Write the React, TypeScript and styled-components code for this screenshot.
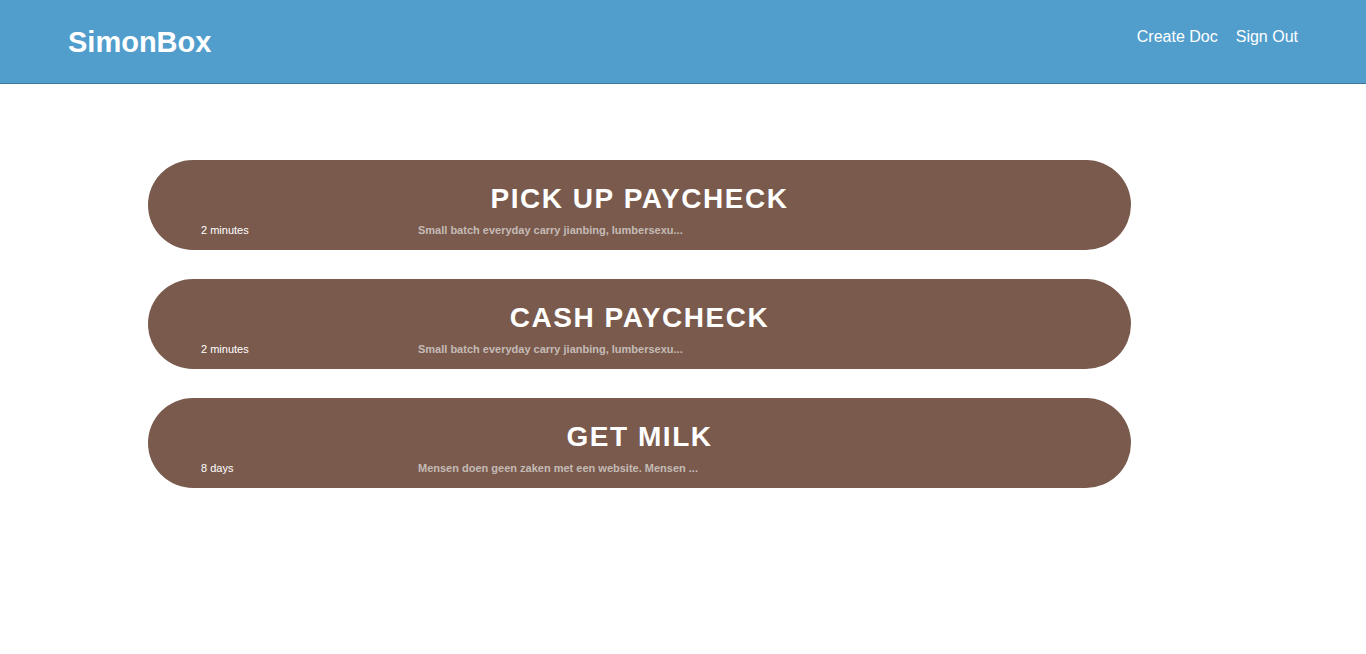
import React from "react";
import styled, { createGlobalStyle } from "styled-components";

const GlobalStyle = createGlobalStyle`
  html, body { margin: 0; padding: 0; background: #ffffff; }
  body { font-family: "Liberation Sans", Arial, sans-serif; }
`;

const Header = styled.header`
  display: flex;
  align-items: center;
  justify-content: space-between;
  height: 83px;
  padding: 0 68px;
  background: #519ecd;
  border-bottom: 1px solid #3b77a0;
`;

const Logo = styled.div`
  color: #ffffff;
  font-size: 29px;
  font-weight: 700;
  line-height: 33px;
  padding-top: 1px;
`;

const Nav = styled.nav`
  display: flex;
  gap: 18px;
  margin-bottom: 10px;
`;

const NavLink = styled.a`
  color: #ffffff;
  font-size: 16px;
  line-height: 18px;
  text-decoration: none;
  cursor: pointer;
`;

const List = styled.main`
  display: flex;
  flex-direction: column;
  gap: 29px;
  padding: 76px 0 0 148px;
`;

const Card = styled.div`
  box-sizing: border-box;
  width: 983px;
  height: 90px;
  border-radius: 45px;
  background: #7a5a4d;
  padding-top: 23px;
`;

const Title = styled.h2`
  margin: 0;
  text-align: center;
  color: #ffffff;
  font-size: 28px;
  font-weight: 700;
  letter-spacing: 1.55px;
  line-height: 32px;
`;

const Meta = styled.div`
  display: flex;
  margin-top: 9px;
  padding-left: 53px;
  font-size: 11px;
  line-height: 13px;
`;

const Time = styled.span`
  width: 217px;
  color: #ffffff;
`;

const Excerpt = styled.span`
  color: #c4bab5;
  font-weight: 700;
`;

const docs = [
  { title: "PICK UP PAYCHECK", time: "2 minutes", excerpt: "Small batch everyday carry jianbing, lumbersexu..." },
  { title: "CASH PAYCHECK", time: "2 minutes", excerpt: "Small batch everyday carry jianbing, lumbersexu..." },
  { title: "GET MILK", time: "8 days", excerpt: "Mensen doen geen zaken met een website. Mensen ..." },
];

export default function App() {
  return (
    <>
      <GlobalStyle />
      <Header>
        <Logo>SimonBox</Logo>
        <Nav>
          <NavLink>Create Doc</NavLink>
          <NavLink>Sign Out</NavLink>
        </Nav>
      </Header>
      <List>
        {docs.map((d) => (
          <Card key={d.title}>
            <Title>{d.title}</Title>
            <Meta>
              <Time>{d.time}</Time>
              <Excerpt>{d.excerpt}</Excerpt>
            </Meta>
          </Card>
        ))}
      </List>
    </>
  );
}
